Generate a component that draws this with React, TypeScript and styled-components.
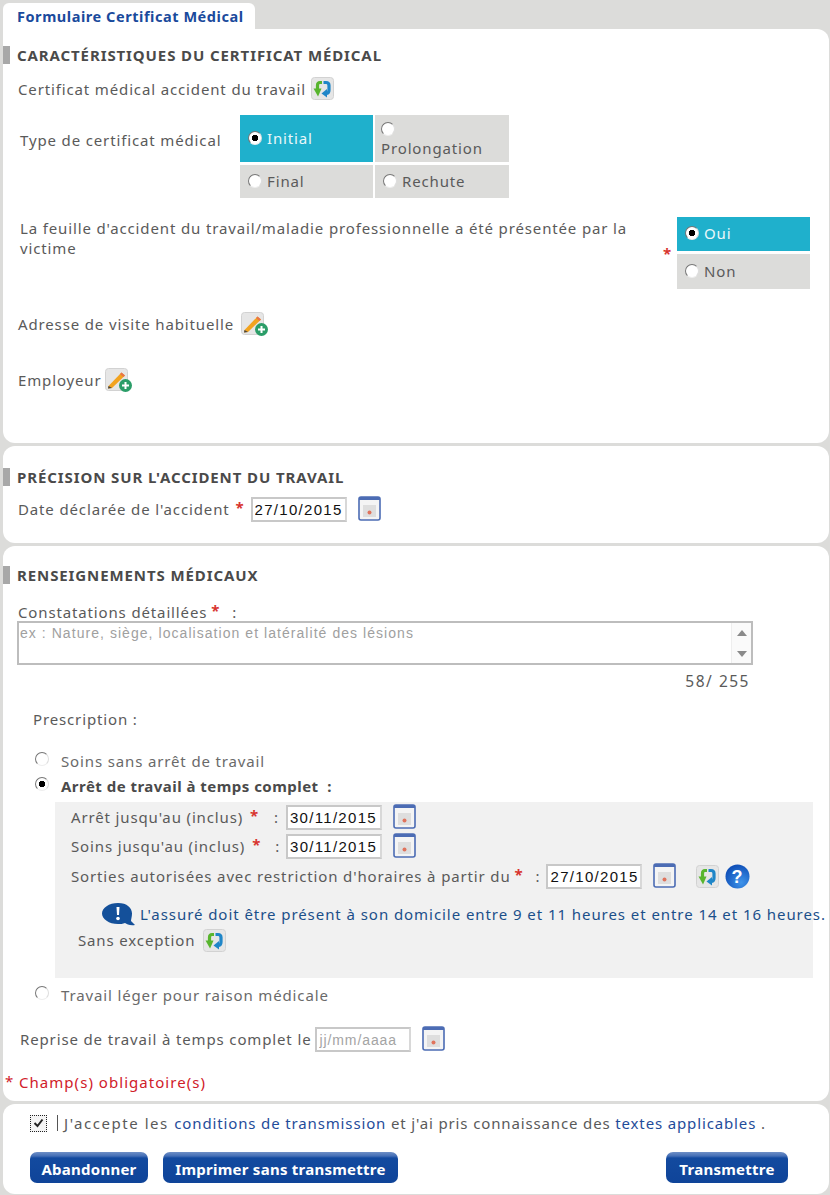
import React from "react";
import styled, { createGlobalStyle } from "styled-components";

const GlobalStyle = createGlobalStyle`
  html, body {
    margin: 0;
    padding: 0;
    background: #dcdcda;
  }
  body {
    font-family: "Noto Sans", "DejaVu Sans", sans-serif;
    font-size: 15px;
    color: #5a5a5a;
    letter-spacing: 0.86px;
  }
  * {
    box-sizing: border-box;
  }
`;

const Page = styled.div`
  width: 830px;
  height: 1195px;
  overflow: hidden;
  padding: 3px 1px 0 3px;
  display: flex;
  flex-direction: column;
`;

const Tab = styled.div`
  width: 252px;
  height: 26px;
  background: #fff;
  border-radius: 6px 6px 0 0;
  padding-left: 14px;
  line-height: 26px;
  font-weight: 700;
  font-size: 14.5px;
  letter-spacing: 0.55px;
  color: #1a4a9c;
`;

const Panel = styled.section<{ $height: number; $first?: boolean }>`
  height: ${({ $height }) => $height}px;
  flex-shrink: 0;
  background: #fff;
  border-radius: ${({ $first }) => ($first ? "0 12px 12px 12px" : "12px")};
  margin-top: ${({ $first }) => ($first ? 0 : 3)}px;
  display: flex;
  flex-direction: column;
`;

const SectionTitle = styled.h2<{ $top: number }>`
  margin: ${({ $top }) => $top}px 0 0;
  height: 18px;
  line-height: 18px;
  border-left: 7px solid #a8a8a8;
  padding-left: 7px;
  font-size: 15px;
  font-weight: 700;
  letter-spacing: 0.9px;
  color: #4a4a4a;
`;

const Row = styled.div<{ $top: number; $left: number; $height?: number }>`
  display: flex;
  align-items: center;
  flex-shrink: 0;
  margin-top: ${({ $top }) => $top}px;
  margin-left: ${({ $left }) => $left}px;
  height: ${({ $height }) => $height ?? 26}px;
  white-space: nowrap;
`;

const TypeRow = styled.div`
  display: flex;
  margin-top: 13px;
`;

const TypeLabel = styled.div`
  width: 237px;
  padding: 15px 0 0 17px;
  line-height: 20px;
`;

const ChoiceGrid = styled.div`
  display: grid;
  grid-template-columns: 133px 134px;
  grid-template-rows: 47px 33px;
  gap: 3px 2px;
`;

const QuestionRow = styled.div`
  display: flex;
  margin-top: 19px;
`;

const Question = styled.div`
  width: 661px;
  padding: 1px 20px 0 17px;
  line-height: 20px;
`;

const ChoiceStack = styled.div`
  display: grid;
  grid-template-columns: 133px;
  grid-template-rows: 34px 35px;
  gap: 3px;
`;

const Choice = styled.div<{ $active?: boolean; $stacked?: boolean }>`
  display: flex;
  flex-direction: ${({ $stacked }) => ($stacked ? "column" : "row")};
  align-items: ${({ $stacked }) => ($stacked ? "flex-start" : "center")};
  gap: ${({ $stacked }) => ($stacked ? 2 : 5)}px;
  padding: ${({ $stacked }) => ($stacked ? "7px 0 0 6px" : "0 0 2px 8px")};
  background: ${({ $active }) => ($active ? "#1fb0cc" : "#dcdcda")};
  color: ${({ $active }) => ($active ? "#eaf7fa" : "#5a5a5a")};
`;

const Radio = styled.span<{ $checked?: boolean }>`
  display: inline-block;
  flex-shrink: 0;
  width: 14px;
  height: 14px;
  border-radius: 50%;
  border: 1.5px solid #777;
  border-right-color: #ddd;
  border-bottom-color: #eee;
  background: ${({ $checked }) =>
    $checked ? "radial-gradient(circle, #000 0 3px, #fff 3.5px)" : "#fff"};
`;

const RaisedRadio = styled(Radio)`
  margin-top: -5px;
`;

const Required = styled.span<{ $left?: number; $right?: number }>`
  color: #d8352f;
  font-weight: 700;
  font-size: 15px;
  margin: -4px ${({ $right }) => $right ?? 4}px 0 ${({ $left }) => $left ?? 4}px;
`;

const SideRequired = styled(Required)`
  align-self: center;
  width: 14px;
  margin: 0 0 0 -1px;
`;

const DateField = styled.input<{ $left?: number }>`
  width: 96px;
  height: 25px;
  padding: 2px;
  margin: 0 11px 0 ${({ $left }) => $left ?? 0}px;
  border: 2px solid #c8c8c8;
  border-right-color: #d8d8d8;
  background: #fff;
  font-family: "Liberation Sans", Arial, sans-serif;
  font-size: 15px;
  letter-spacing: 1.3px;
  color: #111;

  &::placeholder {
    color: #a4a4a4;
    opacity: 1;
    letter-spacing: 0.9px;
    font-size: 14px;
  }
`;

const Colon = styled.span<{ $left?: number; $right?: number }>`
  margin: 0 ${({ $right }) => $right ?? 4}px 0 ${({ $left }) => $left ?? 8}px;
`;

const IconSlot = styled.svg<{ $left?: number; $lift?: number }>`
  flex-shrink: 0;
  margin-left: ${({ $left }) => $left ?? 0}px;
  margin-top: ${({ $lift }) => -($lift ?? 0)}px;
`;

const TextAreaBox = styled.div`
  display: flex;
  width: 736px;
  height: 44px;
  margin: 0 0 0 14px;
  flex-shrink: 0;
  border: 2px solid #bdbdbd;
`;

const TextArea = styled.textarea`
  flex: 1;
  border: 0;
  outline: 0;
  padding: 2px 0 0 1px;
  resize: none;
  overflow: hidden;
  font-family: "Liberation Sans", Arial, sans-serif;
  font-size: 14px;
  letter-spacing: 1.05px;

  &::placeholder {
    color: #a0a0a0;
    opacity: 1;
  }
`;

const ScrollTrack = styled.div`
  width: 20px;
  display: flex;
  flex-direction: column;
  align-items: center;
  justify-content: space-between;
  padding: 7px 0 6px;
  border-left: 1px solid #eee;
  background: #fafafa;
`;

const ScrollArrow = styled.span<{ $down?: boolean }>`
  width: 0;
  height: 0;
  border-left: 5px solid transparent;
  border-right: 5px solid transparent;
  border-${({ $down }) => ($down ? "top" : "bottom")}: 6px solid #8a8a8a;
`;

const Counter = styled.div`
  width: 747px;
  height: 18px;
  line-height: 18px;
  margin-top: 7px;
  text-align: right;
  flex-shrink: 0;
  font-size: 15.5px;
  letter-spacing: 1.5px;
`;

const RadioLabel = styled.span<{ $bold?: boolean }>`
  margin-left: 12px;
  font-weight: ${({ $bold }) => ($bold ? 700 : 400)};
  letter-spacing: ${({ $bold }) => ($bold ? "0.47px" : "0.86px")};
  color: ${({ $bold }) => ($bold ? "#4a4a4a" : "#6a6a6a")};
`;

const StopBox = styled.div`
  width: 758px;
  height: 176px;
  margin: 7px 0 0 52px;
  flex-shrink: 0;
  background: #f1f1f1;
  display: flex;
  flex-direction: column;
`;

const InfoText = styled.span`
  margin-left: 5px;
  color: #1b4f8a;
  letter-spacing: 0.94px;
`;

const Mandatory = styled.div`
  display: flex;
  align-items: center;
  height: 18px;
  margin: 21px 0 0 2px;
  flex-shrink: 0;
  color: #d0202a;
  letter-spacing: 1.04px;
`;

const MandatoryStar = styled.span`
  width: 14px;
  margin-top: -3px;
`;

const CheckBox = styled.span`
  width: 17px;
  height: 17px;
  border: 1px dotted #222;
  display: flex;
  align-items: center;
  justify-content: center;
  background: #f4f4f4;
`;

const Divider = styled.span`
  width: 1px;
  height: 16px;
  background: #555;
  margin: 0 6px 0 10px;
`;

const LeadText = styled.span`
  letter-spacing: 1.55px;
`;

const DocLink = styled.a`
  color: #1f4c9a;
  text-decoration: none;
`;

const ButtonBar = styled.div`
  display: flex;
  gap: 15px;
  margin: 20px 41px 0 27px;
`;

const ActionButton = styled.button<{ $width: number; $right?: boolean }>`
  width: ${({ $width }) => $width}px;
  height: 31px;
  margin-left: ${({ $right }) => ($right ? "auto" : 0)};
  border: 0;
  border-radius: 7px;
  padding: 3px 0 0;
  background: linear-gradient(#6f8fc6 0, #456fb6 4px, #134a9f 6px, #0f4499 100%);
  font-family: "Noto Sans", "DejaVu Sans", sans-serif;
  font-size: 15px;
  font-weight: 700;
  letter-spacing: 0.25px;
  color: #fff;
`;

const RefreshIcon: React.FC<{ left?: number; lift?: number }> = ({ left, lift }) => (
  <IconSlot $left={left} $lift={lift} width="23" height="23" viewBox="0 0 23 23">
    <rect x="0.5" y="0.5" width="22" height="22" rx="3" fill="#e6e6e6" stroke="#d2d2d2" />
    <path d="M11 5.5 H9 Q6.5 5.5 6.5 8.5 V13" fill="none" stroke="#58b52e" strokeWidth="3.2" />
    <path d="M2.5 11.5 H10.5 L7 19.5 Z" fill="#58b52e" />
    <path d="M12.5 5.5 H15 Q18 5.5 18 8.5 V13 Q18 16.5 15 16.5" fill="none" stroke="#1f86c8" strokeWidth="3.2" />
    <path d="M16 12 V20.5 L10.5 16.5 Z" fill="#1f86c8" />
  </IconSlot>
);

const PencilAddIcon: React.FC<{ left?: number }> = ({ left }) => (
  <IconSlot $left={left} width="28" height="25" viewBox="0 0 28 25">
    <rect x="0.5" y="0.5" width="22" height="22" rx="3" fill="#e6e6e6" stroke="#d2d2d2" />
    <path d="M3.5 18 L16.5 4.5 L20 7.5 L7 20 L3 20.5 Z" fill="#f2a31f" />
    <path d="M15 6 L16.5 4.5 L20 7.5 L18.5 9 Z" fill="#e8734a" />
    <path d="M3.5 18 L7 20 L3 20.5 Z" fill="#444" />
    <circle cx="20.5" cy="17.5" r="6.5" fill="#2a9d68" />
    <path d="M17 17.5 H24 M20.5 14 V21" stroke="#fff" strokeWidth="2" />
  </IconSlot>
);

const CalendarIcon: React.FC<{ lift?: number }> = ({ lift }) => (
  <IconSlot $lift={lift ?? 2} width="23" height="25" viewBox="0 0 23 25">
    <rect x="1" y="1" width="21" height="23" rx="2" fill="#f4f4f4" stroke="#4c6cb4" strokeWidth="1.6" />
    <rect x="1" y="1" width="21" height="3" fill="#4c6cb4" />
    <rect x="5" y="9" width="13" height="12" fill="#dedede" />
    <rect x="9.5" y="14.5" width="4" height="4" rx="2" fill="#e0735c" />
  </IconSlot>
);

const HelpIcon: React.FC = () => (
  <IconSlot $left={6} width="25" height="25" viewBox="0 0 25 25">
    <defs>
      <radialGradient id="helpFill" cx="0.65" cy="0.75" r="0.8">
        <stop offset="0" stopColor="#3f94ea" />
        <stop offset="1" stopColor="#0c4bb5" />
      </radialGradient>
    </defs>
    <circle cx="12.5" cy="12.5" r="12" fill="url(#helpFill)" />
    <text x="12.5" y="19" textAnchor="middle" fontFamily="Liberation Sans" fontSize="18" fontWeight="700" fill="#fff">?</text>
  </IconSlot>
);

const InfoBubbleIcon: React.FC = () => (
  <IconSlot width="33" height="25" viewBox="0 0 33 25">
    <path d="M16 1 C25 1 30 6 30 11.5 C30 15 29 17 29 19 L33 23 C28 24 25 22 23 21 C21 22 18 22 16 22 C7 22 0 17 0 11.5 C0 6 7 1 16 1 Z" fill="#14509a" />
    <path d="M14.5 5 H17.5 L17 13 H15 Z" fill="#fff" />
    <circle cx="16" cy="16.5" r="1.8" fill="#fff" />
  </IconSlot>
);

const App: React.FC = () => (
  <>
    <GlobalStyle />
    <Page>
      <Tab>Formulaire Certificat Médical</Tab>

      <Panel $first $height={414}>
        <SectionTitle $top={17}>CARACTÉRISTIQUES DU CERTIFICAT MÉDICAL</SectionTitle>
        <Row $top={12} $left={15}>
          Certificat médical accident du travail
          <RefreshIcon left={5} lift={2} />
        </Row>

        <TypeRow>
          <TypeLabel>Type de certificat médical</TypeLabel>
          <ChoiceGrid>
            <Choice $active><Radio $checked />Initial</Choice>
            <Choice $stacked><Radio />Prolongation</Choice>
            <Choice><Radio />Final</Choice>
            <Choice><Radio />Rechute</Choice>
          </ChoiceGrid>
        </TypeRow>

        <QuestionRow>
          <Question>
            La feuille d'accident du travail/maladie professionnelle a été présentée par la victime
          </Question>
          <SideRequired>*</SideRequired>
          <ChoiceStack>
            <Choice $active><Radio $checked />Oui</Choice>
            <Choice><Radio />Non</Choice>
          </ChoiceStack>
        </QuestionRow>

        <Row $top={22} $left={15}>
          Adresse de visite habituelle
          <PencilAddIcon left={7} />
        </Row>
        <Row $top={30} $left={15}>
          Employeur
          <PencilAddIcon left={3} />
        </Row>
      </Panel>

      <Panel $height={97}>
        <SectionTitle $top={22}>PRÉCISION SUR L'ACCIDENT DU TRAVAIL</SectionTitle>
        <Row $top={10} $left={15}>
          Date déclarée de l'accident
          <Required $left={6} $right={6}>*</Required>
          <DateField readOnly value="27/10/2015" />
          <CalendarIcon />
        </Row>
      </Panel>

      <Panel $height={555}>
        <SectionTitle $top={20}>RENSEIGNEMENTS MÉDICAUX</SectionTitle>
        <Row $top={19} $left={15} $height={18}>
          Constatations détaillées
          <Required>*</Required>
          <Colon>:</Colon>
        </Row>
        <TextAreaBox>
          <TextArea readOnly placeholder="ex : Nature, siège, localisation et latéralité des lésions" />
          <ScrollTrack>
            <ScrollArrow />
            <ScrollArrow $down />
          </ScrollTrack>
        </TextAreaBox>
        <Counter>58/ 255</Counter>

        <Row $top={20} $left={30} $height={18}>Prescription :</Row>
        <Row $top={24} $left={32} $height={18}>
          <RaisedRadio />
          <RadioLabel>Soins sans arrêt de travail</RadioLabel>
        </Row>
        <Row $top={7} $left={32} $height={18}>
          <RaisedRadio $checked />
          <RadioLabel $bold>Arrêt de travail à temps complet&nbsp; :</RadioLabel>
        </Row>

        <StopBox>
          <Row $top={2} $left={16}>
            Arrêt jusqu'au (inclus)
            <Required $left={7}>*</Required>
            <Colon $left={11} $right={7}>:</Colon>
            <DateField readOnly value="30/11/2015" />
            <CalendarIcon />
          </Row>
          <Row $top={3} $left={16}>
            Soins jusqu'au (inclus)
            <Required $left={7}>*</Required>
            <Colon $left={10} $right={6}>:</Colon>
            <DateField readOnly value="30/11/2015" />
            <CalendarIcon />
          </Row>
          <Row $top={4} $left={16}>
            Sorties autorisées avec restriction d'horaires à partir du
            <Required>*</Required>
            <Colon $right={6}>:</Colon>
            <DateField readOnly value="27/10/2015" />
            <CalendarIcon />
            <RefreshIcon left={20} />
            <HelpIcon />
          </Row>
          <Row $top={12} $left={47}>
            <InfoBubbleIcon />
            <InfoText>L'assuré doit être présent à son domicile entre 9 et 11 heures et entre 14 et 16 heures.</InfoText>
          </Row>
          <Row $top={0} $left={23}>
            Sans exception
            <RefreshIcon left={8} />
          </Row>
        </StopBox>

        <Row $top={8} $left={32} $height={18}>
          <RaisedRadio />
          <RadioLabel>Travail léger pour raison médicale</RadioLabel>
        </Row>
        <Row $top={22} $left={17}>
          Reprise de travail à temps complet le
          <DateField $left={4} placeholder="jj/mm/aaaa" readOnly />
          <CalendarIcon />
        </Row>
        <Mandatory>
          <MandatoryStar>*</MandatoryStar>
          Champ(s) obligatoire(s)
        </Mandatory>
      </Panel>

      <Panel $height={90}>
        <Row $top={10} $left={27} $height={18}>
          <CheckBox>
            <svg width="11" height="10" viewBox="0 0 11 10">
              <path d="M1.5 5 L4.5 8 L9.5 1.5" fill="none" stroke="#222" strokeWidth="2" />
            </svg>
          </CheckBox>
          <Divider />
          <LeadText>J'accepte les&nbsp;</LeadText>
          <DocLink>conditions de transmission</DocLink>
          &nbsp;et j'ai pris connaissance des&nbsp;
          <DocLink>textes applicables</DocLink>
          &nbsp;.
        </Row>
        <ButtonBar>
          <ActionButton $width={118}>Abandonner</ActionButton>
          <ActionButton $width={235}>Imprimer sans transmettre</ActionButton>
          <ActionButton $width={122} $right>Transmettre</ActionButton>
        </ButtonBar>
      </Panel>
    </Page>
  </>
);

export default App;
